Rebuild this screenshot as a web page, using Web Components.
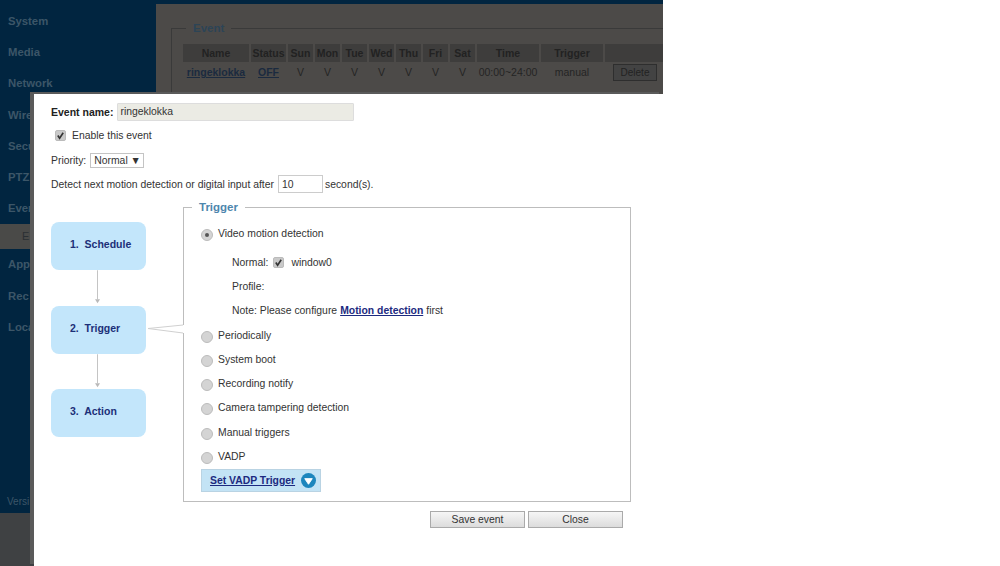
<!doctype html>
<html>
<head>
<meta charset="utf-8">
<style>
  html, body { margin: 0; height: 100%; background: #fff; overflow: hidden; }
  body { font: 12px "Liberation Sans", Arial, sans-serif; color: #333; }
</style>
</head>
<body>
<cam-page>
  <side-nav slot="nav"></side-nav>
  <event-table slot="main"></event-table>
</cam-page>
<event-dialog>
  <flow-steps slot="steps"></flow-steps>
  <trigger-panel slot="panel"></trigger-panel>
</event-dialog>

<script>
class CamPage extends HTMLElement {
  connectedCallback() {
    this.attachShadow({ mode: 'open' }).innerHTML = `
<style>
  :host { display: flex; width: 663px; height: 566px; background: #3f4143; flex-direction: column; }
  .top { height: 4px; background: #012540; flex: none; }
  .body { display: flex; height: 509px; flex: none; }
  .nav { width: 156px; background: #012540; flex: none; }
  .main { flex: 1; min-width: 0; background: #4c4a48; overflow: hidden; }
</style>
<div class="top"></div>
<div class="body">
  <div class="nav"><slot name="nav"></slot></div>
  <div class="main"><slot name="main"></slot></div>
</div>`;
  }
}

class SideNav extends HTMLElement {
  connectedCallback() {
    // only the part of each label that shows left of the dialog
    const items = ['System', 'Media', 'Network', 'Wire', 'Secu', 'PTZ', 'Even'];
    const after = ['App', 'Rec', 'Loca'];
    const row = (t) => `<div class="item">${t}</div>`;
    this.attachShadow({ mode: 'open' }).innerHTML = `
<style>
  :host { display: flex; flex-direction: column; height: 100%; padding-top: 2px; box-sizing: border-box; position: relative; }
  .item { height: 31.2px; padding-left: 8px; font: bold 11.3px/31px "Liberation Sans", Arial, sans-serif; color: #3c5668; white-space: nowrap; flex: none; }
  .sub { height: 25px; line-height: 24px; background: #4a4a48; padding-left: 22px; color: #2a2f33; font-size: 11px; flex: none; }
  .ver { position: absolute; left: 7px; top: 492px; font-size: 10px; color: #3c5668; }
</style>
${items.map(row).join('')}
<div class="sub">E</div>
${after.map(row).join('')}
<div class="ver">Versi</div>`;
  }
}

class EventTable extends HTMLElement {
  connectedCallback() {
    const cols = [['Name', 66], ['Status', 35], ['Sun', 25], ['Mon', 25], ['Tue', 25], ['Wed', 25], ['Thu', 25], ['Fri', 25], ['Sat', 25], ['Time', 62], ['Trigger', 62], ['', 58]];
    const vals = ['<u>ringeklokka</u>', '<u>OFF</u>', 'V', 'V', 'V', 'V', 'V', 'V', 'V', '00:00~24:00', 'manual', '<span class="del">Delete</span>'];
    const tpl = cols.map(c => `${c[1]}px`).join(' ');
    this.attachShadow({ mode: 'open' }).innerHTML = `
<style>
  :host { display: block; padding: 24px 0 0 15px; height: 90px; box-sizing: border-box; overflow: hidden; }
  .box { border: 1px solid #3a3a3a; border-right: 0; padding: 0 0 0 11px; height: 120px; position: relative; }
  .legend { position: absolute; left: 14px; top: -8px; background: #4c4a48; padding: 0 7px; color: #2c4456; font-weight: bold; font-size: 11.5px; line-height: 14px; }
  .grid { display: grid; grid-template-columns: ${tpl}; column-gap: 2px; padding-top: 15px; }
  .h { height: 18px; line-height: 18px; background: #3e3d3c; text-align: center; font-weight: bold; font-size: 10.5px; color: #222; }
  .c { height: 20px; display: flex; align-items: center; justify-content: center; font-size: 10.5px; color: #242424; white-space: nowrap; }
  u { color: #1b2a3f; font-weight: bold; }
  .del { display: block; width: 44px; height: 17px; line-height: 15px; box-sizing: border-box; text-align: center; border: 1px solid #2e2e2e; background: #434343; color: #222; font-size: 10px; margin-left: 2px; }
</style>
<div class="box">
  <div class="legend">Event</div>
  <div class="grid">
    ${cols.map(c => `<div class="h">${c[0]}</div>`).join('')}
    ${vals.map(v => `<div class="c">${v}</div>`).join('')}
  </div>
</div>`;
  }
}

class EventDialog extends HTMLElement {
  connectedCallback() {
    this.attachShadow({ mode: 'open' }).innerHTML = `
<style>
  :host { position: absolute; left: 34px; top: 94px; width: 629px; height: 472px; background: #fff; box-shadow: -4px -2px 0 #5a5a5a; box-sizing: border-box; padding: 9px 0 0 17px; font-size: 10.4px; color: #333; }
  .line { display: flex; align-items: center; white-space: nowrap; }
  b { color: #222; font-size: 10.5px; }
  .name { height: 18px; margin-left: 4px; width: 237px; border: 1px solid #ddd; background: #ebebe4; padding-left: 2px; box-sizing: border-box; line-height: 16px; color: #333; border-radius: 1px; }
  .en { margin-top: 7px; padding-left: 4px; height: 15px; }
  .chk { width: 11px; height: 11px; border-radius: 2px; background: #c9c9c9; border: 1px solid #bbb; box-sizing: border-box; margin-right: 6px; display: flex; }
  .chk svg { width: 9px; height: 9px; }
  .pri { margin-top: 9px; height: 16px; }
  .sel { margin-left: 4px; width: 54px; height: 15px; border: 1px solid #c4c4c4; box-sizing: border-box; line-height: 14px; padding-left: 3px; }
  .det { margin-top: 7px; height: 18px; }
  .num { width: 45px; height: 18px; margin: 0 2px 0 4px; border: 1px solid #ccc; box-sizing: border-box; line-height: 17px; padding-left: 3px; }
  .flow { display: flex; margin-top: 14px; }
  .steps { width: 132px; flex: none; position: relative; z-index: 1; }
  .btns { display: flex; justify-content: flex-end; gap: 3px; width: 572px; margin-top: 9px; }
  .btn { width: 95px; height: 17px; line-height: 16px; box-sizing: border-box; text-align: center; border: 1px solid #aaa; background: linear-gradient(#f6f6f6, #dcdcdc); color: #333; }
</style>
<div class="line"><b>Event name:</b><div class="name">ringeklokka</div></div>
<div class="line en"><span class="chk"><svg viewBox="0 0 10 10"><path d="M2 5l2 3 4-6" fill="none" stroke="#333" stroke-width="1.8"/></svg></span>Enable this event</div>
<div class="line pri">Priority:<div class="sel">Normal ▼</div></div>
<div class="line det">Detect next motion detection or digital input after<div class="num">10</div>second(s).</div>
<div class="flow">
  <div class="steps"><slot name="steps"></slot></div>
  <slot name="panel"></slot>
</div>
<div class="btns"><div class="btn">Save event</div><div class="btn">Close</div></div>`;
  }
}

class FlowSteps extends HTMLElement {
  connectedCallback() {
    this.attachShadow({ mode: 'open' }).innerHTML = `
<style>
  :host { display: flex; flex-direction: column; padding-top: 15px; position: relative; }
  .step { width: 95px; height: 48px; background: #c3e6fb; border-radius: 8px; font-weight: bold; font-size: 10.5px; color: #1c2f78; line-height: 45px; padding-left: 19px; box-sizing: border-box; white-space: pre; flex: none; }
  .arrow { height: 35.5px; width: 95px; display: block; flex: none; }
  .tie { position: absolute; left: 97px; top: 117px; }
</style>
<div class="step">1.  Schedule</div>
<svg class="arrow" viewBox="0 0 95 35"><path d="M46.500 0v29" stroke="#c4c4c4"/><path d="M44 29h5l-2.500 4z" fill="#b9b9b9"/></svg>
<div class="step">2.  Trigger</div>
<svg class="arrow" viewBox="0 0 95 35"><path d="M46.500 0v29" stroke="#c4c4c4"/><path d="M44 29h5l-2.500 4z" fill="#b9b9b9"/></svg>
<div class="step">3.  Action</div>
<svg class="tie" width="37" height="12" viewBox="0 0 37 12"><path d="M35.500 1v8" stroke="#fff" stroke-width="2"/><path d="M0 4.500L35 1M0 4.500L35 9" fill="none" stroke="#d0d0d0"/></svg>`;
  }
}

class TriggerPanel extends HTMLElement {
  connectedCallback() {
    const radio = (t, on) => `<div class="r"><span class="dot${on ? ' on' : ''}"></span>${t}</div>`;
    this.attachShadow({ mode: 'open' }).innerHTML = `
<style>
  :host { display: block; width: 448px; height: 295px; border: 1px solid #bdbdbd; box-sizing: border-box; position: relative; background: #fff; padding: 13px 0 0 17px; font-size: 10.4px; color: #333; }
  .legend { position: absolute; left: 8px; top: -8px; background: #fff; padding: 0 7px; color: #4d86ad; font-weight: bold; font-size: 11.5px; line-height: 14px; }
  .r { display: flex; align-items: center; height: 24.3px; white-space: nowrap; }
  .dot { width: 12px; height: 12px; border-radius: 50%; background: #d4d4d4; border: 1px solid #bcbcbc; box-sizing: border-box; margin: 3px 5px 0 0; position: relative; flex: none; }
  .dot.on::after { content: ''; position: absolute; left: 3px; top: 3px; width: 4px; height: 4px; border-radius: 50%; background: #555; }
  .sub { padding: 5px 0 0 31px; }
  .sub div { height: 24.2px; display: flex; align-items: center; white-space: nowrap; }
  .chk { width: 11px; height: 11px; border-radius: 2px; background: #c9c9c9; border: 1px solid #bbb; box-sizing: border-box; margin: 0 7px 0 5px; display: flex; }
  .chk svg { width: 9px; height: 9px; }
  a { color: #1c2a80; font-weight: bold; text-decoration: underline; margin: 0 3px; }
  .vadp { width: 120px; height: 23px; background: #c3e3f5; border: 1px solid #b9d3e3; box-sizing: border-box; display: flex; align-items: center; padding-left: 8px; gap: 6px; }
  .vadp a { margin: 0; }
  .vadp svg { width: 15px; height: 15px; }
</style>
<div class="legend">Trigger</div>
${radio('Video motion detection', true)}
<div class="sub">
  <div>Normal:<span class="chk"><svg viewBox="0 0 10 10"><path d="M2 5l2 3 4-6" fill="none" stroke="#333" stroke-width="1.8"/></svg></span>window0</div>
  <div>Profile:</div>
  <div>Note: Please configure<a>Motion detection</a>first</div>
</div>
${radio('Periodically')}
${radio('System boot')}
${radio('Recording notify')}
${radio('Camera tampering detection')}
${radio('Manual triggers')}
${radio('VADP')}
<div class="vadp"><a>Set VADP Trigger</a><svg viewBox="0 0 16 16"><circle cx="8" cy="8" r="8" fill="#1d86bd"/><path d="M4 6h8l-4 6z" fill="#fff" stroke="#fff" stroke-linejoin="round"/></svg></div>`;
  }
}

customElements.define('cam-page', CamPage);
customElements.define('side-nav', SideNav);
customElements.define('event-table', EventTable);
customElements.define('event-dialog', EventDialog);
customElements.define('flow-steps', FlowSteps);
customElements.define('trigger-panel', TriggerPanel);
</script>
</body>
</html>
